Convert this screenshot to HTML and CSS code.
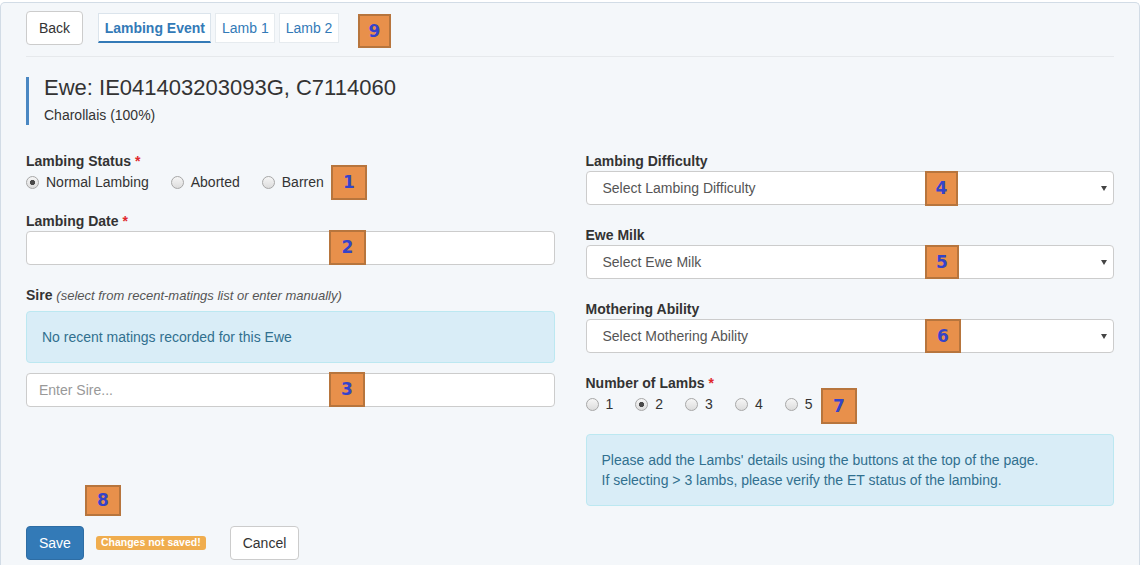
FILE: index.html
```html
<!DOCTYPE html>
<html lang="en">
<head>
<meta charset="utf-8">
<title>Lambing Event</title>
<link rel="stylesheet" href="styles.css">
</head>
<body>
<div class="panel">
  <div class="topbar">
    <button class="btn btn-default">Back</button>
    <div class="tabs">
      <span class="tab active">Lambing Event</span>
      <span class="tab">Lamb 1</span>
      <span class="tab">Lamb 2</span>
    </div>
  </div>
  <div class="divider"></div>

  <div class="ewe">
    <div class="ewe-title">Ewe: IE041403203093G, C7114060</div>
    <div class="ewe-breed">Charollais (100%)</div>
  </div>

  <div class="form-grid">
    <div class="col">
      <div class="group">
        <div class="label">Lambing Status <span class="req">*</span></div>
        <div class="radios">
          <label class="radio"><input type="radio" name="status" checked><span>Normal Lambing</span></label>
          <label class="radio"><input type="radio" name="status"><span>Aborted</span></label>
          <label class="radio"><input type="radio" name="status"><span>Barren</span></label>
        </div>
      </div>
      <div class="group">
        <div class="label">Lambing Date <span class="req">*</span></div>
        <input class="control" type="text">
      </div>
      <div class="group">
        <div class="label">Sire <span class="hint">(select from recent-matings list or enter manually)</span></div>
        <div class="alert alert-sire">No recent matings recorded for this Ewe</div>
        <input class="control sire-input" type="text" placeholder="Enter Sire...">
      </div>
    </div>

    <div class="col">
      <div class="group">
        <div class="label">Lambing Difficulty</div>
        <div class="select-wrap"><select class="control select"><option>Select Lambing Difficulty</option></select></div>
      </div>
      <div class="group">
        <div class="label">Ewe Milk</div>
        <div class="select-wrap"><select class="control select"><option>Select Ewe Milk</option></select></div>
      </div>
      <div class="group">
        <div class="label">Mothering Ability</div>
        <div class="select-wrap"><select class="control select"><option>Select Mothering Ability</option></select></div>
      </div>
      <div class="group">
        <div class="label">Number of Lambs <span class="req">*</span></div>
        <div class="radios">
          <label class="radio"><input type="radio" name="num"><span>1</span></label>
          <label class="radio"><input type="radio" name="num" checked><span>2</span></label>
          <label class="radio"><input type="radio" name="num"><span>3</span></label>
          <label class="radio"><input type="radio" name="num"><span>4</span></label>
          <label class="radio"><input type="radio" name="num"><span>5</span></label>
        </div>
        <div class="alert alert-lambs">Please add the Lambs' details using the buttons at the top of the page.<br>If selecting &gt; 3 lambs, please verify the ET status of the lambing.</div>
      </div>
    </div>
  </div>

  <div class="actions">
    <button class="btn btn-primary">Save</button>
    <span class="badge-warn">Changes not saved!</span>
    <button class="btn btn-default btn-cancel">Cancel</button>
  </div>
</div>

<div class="mark m9">9</div>
<div class="mark m1">1</div>
<div class="mark m2">2</div>
<div class="mark m3">3</div>
<div class="mark m4">4</div>
<div class="mark m5">5</div>
<div class="mark m6">6</div>
<div class="mark m7">7</div>
<div class="mark m8">8</div>
</body>
</html>
```

FILE: styles.css
```css
* { box-sizing: border-box; }

html, body {
  margin: 0;
  padding: 0;
  height: 565px;
  overflow: hidden;
}

body {
  position: relative;
  font-family: "Liberation Sans", Arial, Helvetica, sans-serif;
  font-size: 14px;
  line-height: 20px;
  color: #333;
  background: #ffffff;
}

.panel {
  margin-top: 2px;
  height: 563px;
  border: 1px solid #d2dce6;
  border-bottom: none;
  border-radius: 5px 5px 0 0;
  background: #f4f7fa;
  padding: 8px 25px 0 25px;
}

/* top bar */
.topbar {
  display: flex;
  align-items: center;
  height: 34px;
}

.btn {
  display: inline-block;
  height: 34px;
  padding: 6px 12px;
  font-family: inherit;
  font-size: 14px;
  line-height: 20px;
  border: 1px solid #ccc;
  border-radius: 4px;
  background: #fff;
  color: #333;
  cursor: pointer;
}

.btn-primary {
  background: #337ab7;
  border-color: #2e6da4;
  color: #fff;
}

.tabs {
  display: flex;
  gap: 4px;
  margin-left: 15px;
}

.tab {
  display: block;
  height: 30px;
  padding: 4px 5.5px 4px;
  line-height: 20px;
  background: #fff;
  border: 1px solid #e6ebef;
  color: #337ab7;
}

.tab.active {
  font-weight: bold;
  border-color: #dbe4ec;
  border-bottom: 2px solid #337ab7;
  padding-bottom: 3px;
}

.divider {
  margin-top: 11px;
  height: 1px;
  background: #e6e9ec;
}

/* ewe heading */
.ewe {
  margin-top: 20px;
  border-left: 3px solid #4a87c2;
  padding-left: 15px;
}

.ewe-title {
  font-size: 22px;
  line-height: 22px;
  color: #333;
}

.ewe-breed {
  margin-top: 7px;
  font-size: 14px;
  line-height: 19px;
}

/* form */
.form-grid {
  display: grid;
  grid-template-columns: 1fr 1fr;
  column-gap: 31px;
  margin-top: 26px;
}

.group + .group { margin-top: 20px; }

.col:first-child .group:nth-child(2) { margin-top: 19px; }

.label {
  font-weight: bold;
  line-height: 20px;
}

.req { color: #e0282d; }

.hint {
  font-weight: normal;
  font-style: italic;
  font-size: 13px;
  color: #555;
}

.radios {
  display: flex;
  margin-top: 1px;
  height: 20px;
}

.radio {
  display: flex;
  align-items: center;
  margin-right: 22px;
}

.radio span { margin-left: 7px; }

.radio input {
  -webkit-appearance: none;
  appearance: none;
  width: 13px;
  height: 13px;
  margin: 0;
  border: 1px solid #a7a7a7;
  border-radius: 50%;
  background: linear-gradient(#f6f6f6, #dcdcdc);
}

.radio input:checked {
  background: radial-gradient(circle, #4a4a4a 0 2.4px, transparent 2.9px), linear-gradient(#f6f6f6, #dcdcdc);
}

.control {
  display: block;
  width: 100%;
  height: 34px;
  padding: 6px 12px;
  font-family: inherit;
  font-size: 14px;
  line-height: 20px;
  color: #555;
  background: #fff;
  border: 1px solid #ccc;
  border-radius: 4px;
  outline: none;
}

.control::placeholder { color: #999; }

.select-wrap { position: relative; }

.select {
  -webkit-appearance: none;
  appearance: none;
  padding-left: 16px;
}

.select-wrap::after {
  content: "";
  position: absolute;
  right: 7px;
  top: 15px;
  border-left: 3px solid transparent;
  border-right: 3px solid transparent;
  border-top: 5px solid #444;
}

.alert {
  padding: 15px;
  border: 1px solid #bce8f1;
  border-radius: 4px;
  background: #d9edf7;
  color: #31708f;
  line-height: 20px;
}

.alert-sire { margin-top: 5px; }

.sire-input { margin-top: 10px; }

.alert-lambs { margin-top: 20px; }

/* actions */
.actions {
  display: flex;
  align-items: center;
  margin-top: 20px;
}

.badge-warn {
  margin-left: 12px;
  padding: 1px 5px 2px;
  font-size: 10.5px;
  line-height: 11px;
  font-weight: bold;
  color: #fff;
  background: #f0ad4e;
  border-radius: 3px;
}

.btn-cancel { margin-left: 24px; }

/* annotation markers */
.mark {
  position: absolute;
  display: flex;
  align-items: center;
  justify-content: center;
  background: #e8904b;
  border: 2px solid #b7753d;
  color: #3543c9;
  font-family: "DejaVu Sans", Verdana, sans-serif;
  font-weight: bold;
  font-size: 17px;
  line-height: 1;
}

.m9 { left: 358px; top: 14px; width: 33px; height: 34px; }
.m1 { left: 331px; top: 165px; width: 36px; height: 35px; }
.m2 { left: 329px; top: 230px; width: 37px; height: 35px; }
.m3 { left: 329px; top: 372px; width: 36px; height: 35px; }
.m4 { left: 925px; top: 171px; width: 33px; height: 35px; }
.m5 { left: 925px; top: 245px; width: 34px; height: 34px; }
.m6 { left: 925px; top: 319px; width: 36px; height: 34px; }
.m7 { left: 821px; top: 388px; width: 36px; height: 36px; }
.m8 { left: 85px; top: 485px; width: 36px; height: 31px; }
```
